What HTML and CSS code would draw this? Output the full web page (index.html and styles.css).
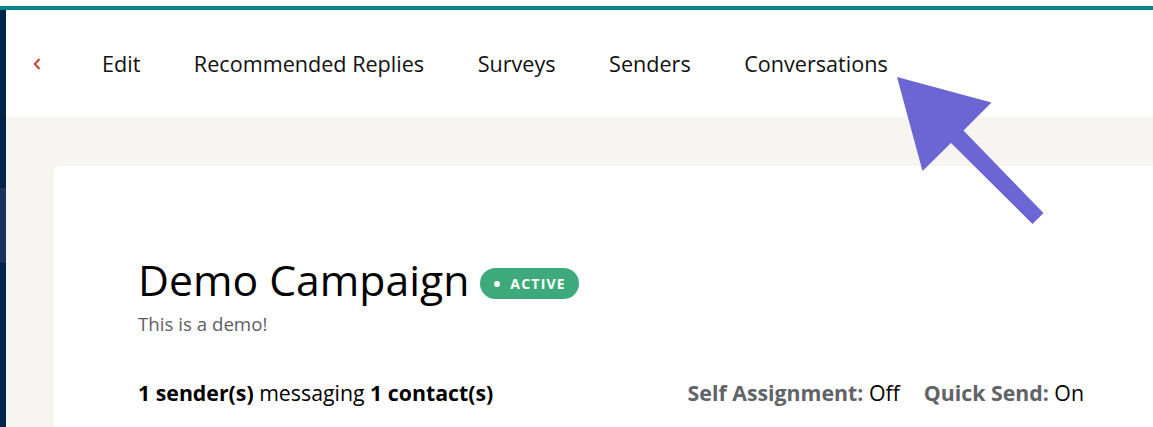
FILE: index.html
```html
<!DOCTYPE html>
<html lang="en">
<head>
<meta charset="utf-8">
<title>Demo Campaign</title>
<link rel="stylesheet" href="styles.css">
</head>
<body>
<div class="top-strip"></div>
<div class="teal-bar"></div>
<div class="app">
  <aside class="sidebar">
    <div class="sidebar-active"></div>
  </aside>
  <div class="main">
    <nav class="tabs">
      <a class="back" href="#" aria-label="Back">
        <svg width="8" height="12" viewBox="0 0 8 12"><path d="M6.5 1 L1.8 6 L6.5 11" fill="none" stroke="#c7432e" stroke-width="2"/></svg>
      </a>
      <a class="tab" href="#">Edit</a>
      <a class="tab" href="#">Recommended Replies</a>
      <a class="tab" href="#">Surveys</a>
      <a class="tab" href="#">Senders</a>
      <a class="tab" href="#">Conversations</a>
    </nav>
    <div class="content">
      <section class="card">
        <div class="title-row">
          <h1 class="title">Demo Campaign</h1>
          <span class="badge"><span class="dot"></span>ACTIVE</span>
        </div>
        <p class="desc">This is a demo!</p>
        <div class="stats">
          <div class="counts"><b>1 sender(s)</b> messaging <b>1 contact(s)</b></div>
          <div class="settings">
            <span class="setting"><span class="label">Self Assignment:</span> Off</span>
            <span class="setting"><span class="label">Quick Send:</span> On</span>
          </div>
        </div>
      </section>
    </div>
  </div>
</div>
<svg class="arrow" width="1153" height="427" viewBox="0 0 1153 427">
  <polygon points="897,77 991.5,102.5 963.5,130.5 1043.5,213 1032.5,224 951,143 922.5,171" fill="#6c66d4"/>
</svg>
</body>
</html>
```
FILE: styles.css
```css
* { box-sizing: border-box; }
html, body { margin: 0; padding: 0; }
body {
  width: 1153px;
  height: 427px;
  overflow: hidden;
  background: #fff;
  font-family: "Open Sans", "Noto Sans", sans-serif;
  color: #111;
  position: relative;
}
.top-strip { height: 6px; background: #fff; }
.teal-bar { height: 4px; background: #00838e; }
.app { display: flex; height: 417px; }
.sidebar {
  width: 6px;
  flex: none;
  background: #012549;
  padding-top: 178px;
}
.sidebar-active { height: 75px; background: #1b3358; }
.main { flex: 1; display: flex; flex-direction: column; min-width: 0; }
.tabs {
  flex: none;
  height: 107px;
  display: flex;
  align-items: center;
  gap: 53.5px;
  padding-left: 27px;
  padding-top: 1px;
  background: #fff;
}
.back { display: flex; width: 8px; margin-right: 7.5px; margin-top: -1px; }
.tab {
  color: #111;
  text-decoration: none;
  font-size: 21.6px;
  line-height: 24px;
}
.content {
  flex: 1;
  min-height: 0;
  overflow: hidden;
  background: #f6f5f2;
  padding: 49px 0 0 48px;
}
.card {
  width: 1114px;
  height: 300px;
  background: #fff;
  border-radius: 6px;
  padding: 88px 84px 0 84px;
}
.title-row { display: flex; align-items: center; }
.title {
  margin: 0;
  font-size: 42.7px;
  font-weight: 400;
  line-height: 52px;
  color: #000;
}
.badge {
  margin-left: 11px;
  margin-top: 7px;
  height: 31px;
  padding: 0 13px 0 14px;
  border-radius: 16px;
  background: #3eaa7c;
  color: #fff;
  font-size: 14px;
  font-weight: 700;
  letter-spacing: 1.2px;
  display: flex;
  align-items: center;
}
.dot {
  width: 6px;
  height: 6px;
  border-radius: 50%;
  background: #fff;
  margin-right: 10px;
}
.desc {
  margin: 7px 0 0 0;
  font-size: 18.7px;
  line-height: 22px;
  color: #5d5f63;
}
.stats {
  margin-top: 46px;
  display: flex;
  justify-content: space-between;
  font-size: 21.3px;
  line-height: 24px;
  color: #000;
}
.settings { display: flex; gap: 24px; }
.label { font-weight: 700; color: #606367; }
.arrow { position: absolute; left: 0; top: 0; pointer-events: none; }
```
